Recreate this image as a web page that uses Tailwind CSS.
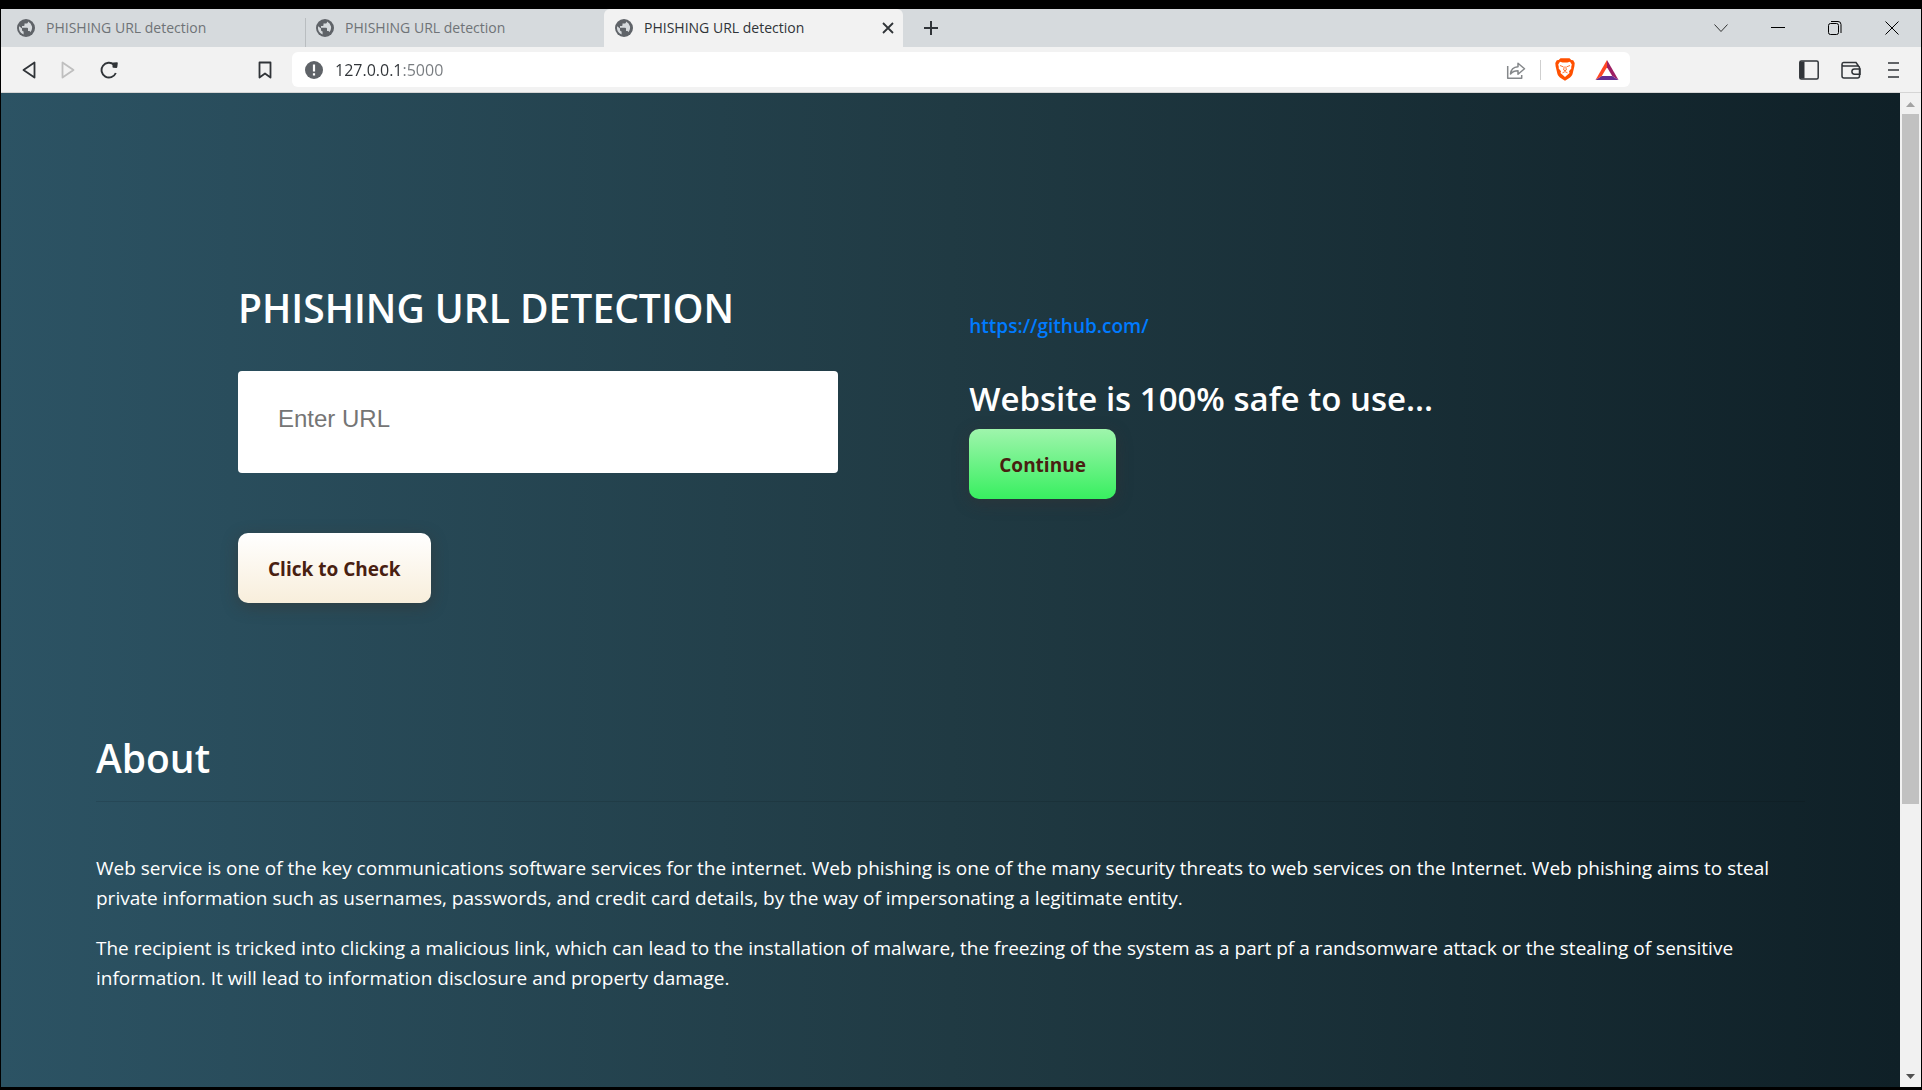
<!DOCTYPE html>
<html lang="en">
<head>
<meta charset="utf-8">
<meta name="viewport" content="width=device-width, initial-scale=1">
<title>PHISHING URL detection</title>
<script src="https://cdn.jsdelivr.net/npm/@tailwindcss/browser@4"></script>
</head>
<body class="flex min-h-screen flex-col bg-black px-px pt-[9px] pb-[3px] font-['Open_Sans','Noto_Sans',sans-serif]">
<svg class="hidden" aria-hidden="true">
  <symbol id="globe" viewBox="0 0 18 18">
    <circle cx="9" cy="9" r="9" fill="#5f6368"/>
    <path fill="#d6dadd" d="M2.2 7.2 5 9.6v1.2c0 .9.7 1.6 1.6 1.6v3.1A6.9 6.9 0 0 1 2.2 7.2zM11 2.4v.5c0 .9-.8 1.7-1.700 1.700H7.500v1.600c0 .5-.4.8-.9.8H5v1.700h5.100c.5 0 .9.4.9.9v2.400h.8c.8 0 1.400.5 1.600 1.200A6.900 6.900 0 0 0 11 2.400z"/>
  </symbol>
</svg>

<header class="bg-[#f2f2f2] text-[#303438]">
  <div class="flex h-[38px] items-stretch bg-[#d6dadd]">
    <div class="flex" role="tablist">
      <button role="tab" class="flex w-[304px] items-center gap-[11px] pl-4 text-left text-sm text-[#6f7377]"><svg class="size-[18px]"><use href="#globe"/></svg>PHISHING URL detection</button>
      <button role="tab" class="flex w-[299px] items-center gap-[11px] pl-[11px] text-left text-sm text-[#6f7377] bg-[linear-gradient(#b9bdc0,#b9bdc0)] bg-[length:1px_29px] bg-bottom-left bg-no-repeat"><svg class="size-[18px]"><use href="#globe"/></svg>PHISHING URL detection</button>
      <div class="flex w-[299px] items-center rounded-t-md bg-[#f2f2f2] pr-[9px] pl-[11px]">
        <button role="tab" aria-selected="true" class="flex flex-1 items-center gap-[11px] text-left text-sm"><svg class="size-[18px]"><use href="#globe"/></svg>PHISHING URL detection</button>
        <button aria-label="Close tab"><svg class="size-3" viewBox="0 0 12 12" fill="none" stroke="currentColor" stroke-width="1.800"><path d="m1 1 10 10M11 1 1 11"/></svg></button>
      </div>
    </div>
    <button aria-label="New tab" class="ml-5"><svg class="size-4" viewBox="0 0 16 16" fill="none" stroke="currentColor" stroke-width="2"><path d="M8 1v14M1 8h14"/></svg></button>
    <div class="ml-auto flex items-center gap-[43px] pr-[22px] text-black">
      <button aria-label="Search tabs"><svg class="size-[14px]" viewBox="0 0 14 14" fill="none" stroke="#333"><path d="m.5 3.500 6.500 7 6.500-7"/></svg></button>
      <button aria-label="Minimize"><svg class="size-[14px]" viewBox="0 0 14 14" fill="none" stroke="currentColor"><path d="M0 6.500h14"/></svg></button>
      <button aria-label="Restore"><svg class="size-[14px]" viewBox="0 0 14 14" fill="none" stroke="currentColor"><rect x=".5" y="2.500" width="10" height="11" rx="2"/><path d="M3 .5h7a3 3 0 0 1 3 3V12"/></svg></button>
      <button aria-label="Close window"><svg class="size-[14px]" viewBox="0 0 14 14" fill="none" stroke="currentColor"><path d="m.5.5 13 13M13.500.5l-13 13"/></svg></button>
    </div>
  </div>
  <div class="flex h-[46px] items-center border-b border-[#d5d5d5] pr-[22px] pl-[21px]">
    <div class="flex gap-[25px]">
      <button aria-label="Back"><svg class="h-[18px] w-[14px]" viewBox="0 0 14 18" fill="none" stroke="currentColor" stroke-width="1.800" stroke-linejoin="round"><path d="M12.500 1.500v15L1.500 9z"/></svg></button>
      <button aria-label="Forward"><svg class="h-[18px] w-[14px]" viewBox="0 0 14 18" fill="none" stroke="#bfbfbf" stroke-width="1.800" stroke-linejoin="round"><path d="M1.500 1.500v15l11-7.500z"/></svg></button>
      <button aria-label="Reload"><svg class="size-[18px]" viewBox="0 0 18 18" fill="none" stroke="currentColor" stroke-width="1.900"><path d="M15.800 12A7.400 7.400 0 1 1 14 3.700"/><path fill="currentColor" stroke="none" d="M12.500 2.500q0-1 1-1L17 1.300q.8 0 .8.800L17.300 6q-.1.900-1 .9l-3-.2q-.8-.1-.8-.9z"/></svg></button>
    </div>
    <button aria-label="Bookmark" class="ml-[140px]"><svg class="h-[18px] w-[14px]" viewBox="0 0 14 18" fill="none" stroke="currentColor" stroke-width="1.800" stroke-linejoin="round"><path d="M1.500 1.500h11v15L7 12.500l-5.500 4z"/></svg></button>
    <div class="ml-[20px] flex h-[35px] flex-1 items-center rounded-md bg-white pr-[11px] pl-[13px]">
      <button aria-label="Site information"><svg class="size-[18px]" viewBox="0 0 18 18"><circle cx="9" cy="9" r="9" fill="#5f6368"/><path stroke="#fff" stroke-width="2.200" d="M9 3.500v7M9 12.300v2.300"/></svg></button>
      <input aria-label="Address" value="127.0.0.1:5000" class="ml-3 min-w-0 flex-1 bg-[linear-gradient(90deg,#303438_66px,#777b7f_66px)] bg-clip-text text-base text-transparent outline-none">
      <button aria-label="Share"><svg class="size-5" viewBox="0 0 20 20" fill="none" stroke="#85888b" stroke-width="1.500" stroke-linejoin="round"><path d="M1.700 6v12.200h14V15"/><path d="M4.500 14c.4-4.500 3-7 7.500-7.300V3.200l6.500 5.600-6.500 5.500v-3.500c-3.500 0-5.700 1-7.500 3.200z"/></svg></button>
      <span class="mx-[14px] h-5 w-px bg-[#cfcfcf]"></span>
      <button aria-label="Brave Shields"><svg class="h-[23px] w-5" viewBox="0 0 20 23"><path fill="#ff5000" d="M5.500.3h9L16.300 2l1.900.3 1.500 2.700-.3 3.200-1.900 8c-.5 2-3.500 4.200-7.500 6.600-4-2.400-7-4.600-7.500-6.600l-1.900-8L.3 5l1.500-2.700L3.700 2z"/><path fill="#fff" d="m5 3.800 2.700.8h4.600l2.700-.8 1.800 2.700-.6 2.500.1 1.500-2.300 2.800.5 1.700-2.500 2.300-2 1.700-2-1.700L5.500 15l.5-1.700-2.300-2.800.1-1.500-.6-2.500z"/><path fill="none" stroke="#ff5000" stroke-width=".8" d="M5 7.500 8.300 8.800M15 7.500l-3.300 1.300M9.200 8.500l-.5 3.500 1.300.8 1.300-.8-.5-3.500M7.500 14.800l2.500-1.200 2.500 1.200"/></svg></button>
      <button aria-label="Brave Rewards" class="ml-5"><svg class="h-5 w-6" viewBox="0 0 24 20"><path fill="#ff4724" d="M12 0v7.200L6.800 16 .5 20z"/><path fill="#9e1f63" d="M12 0v7.200l5.200 8.800 6.300 4z"/><path fill="#662d91" d="M.5 20h23l-6.300-4H6.800z"/></svg></button>
    </div>
    <div class="ml-[169px] flex items-center gap-[22px]">
      <button aria-label="Sidebar"><svg class="size-5" viewBox="0 0 20 20" fill="none" stroke="currentColor" stroke-width="1.500"><rect x=".8" y="1" width="18.400" height="18" rx="1.500"/><path fill="currentColor" stroke="none" d="M1 1.500h4.500v17H1z"/></svg></button>
      <button aria-label="Wallet"><svg class="size-5" viewBox="0 0 20 20" fill="none" stroke="currentColor" stroke-width="1.500"><path d="M1 4v12a2 2 0 0 0 2 2h13.500a2 2 0 0 0 2-2V8a2 2 0 0 0-2-2H2.500C.5 6 .5 2.500 2.500 2.500H15L17.500 6"/><path d="M19 9h-5.500a2.600 2.600 0 0 0 0 5.200H19z"/></svg></button>
      <button aria-label="Menu" class="ml-[5px]"><svg class="h-4 w-[11px]" viewBox="0 0 11 16" fill="none" stroke="currentColor" stroke-width="1.500"><path d="M0 1h11M0 8h11M0 15h11"/></svg></button>
    </div>
  </div>
</header>

<div class="flex flex-1">
  <main class="flex-1 bg-linear-to-r/srgb from-[#2c5364] via-[#203a43] to-[#0f2027] px-[95px] pb-20 text-white">
    <div class="grid grid-cols-[7fr_8fr] pt-[191px] pl-[142px]">
      <form class="flex flex-col items-start" onsubmit="return false">
        <h1 class="text-[39px] leading-12 font-semibold">PHISHING URL DETECTION</h1>
        <input type="text" aria-label="Enter URL" placeholder="Enter URL" class="mt-[39px] h-[102px] w-[600px] rounded bg-white px-10 pb-1.5 font-['Liberation_Sans',sans-serif] text-2xl text-black placeholder:text-[#757575]">
        <button class="mt-[60px] h-[70px] rounded-[10px] bg-linear-to-b/srgb from-white to-[#f8eedb] px-[30px] pt-0.5 text-[19px] font-bold text-[#482010] shadow-[0_4px_16px_rgba(62,45,35,0.4)]">Click to Check</button>
      </form>
      <section class="flex flex-col items-start pt-[30px]">
        <a href="https://github.com/" class="text-[19px] leading-6 font-semibold text-[#007bff]">https://github.com/</a>
        <h2 class="mt-[39px] text-[33px] leading-[44px] font-semibold">Website is 100% safe to use...</h2>
        <button class="mt-2 h-[70px] rounded-[10px] bg-linear-to-b/srgb from-[#9ff5ac] to-[#38ef60] px-[30px] pt-0.5 text-[19px] font-bold text-[#482010] shadow-[0_4px_16px_rgba(62,45,45,0.4)]">Continue</button>
      </section>
    </div>
    <section class="pt-[131px] text-[19px] leading-[30px]">
      <h2 class="text-[39px] leading-12 font-semibold">About</h2>
      <hr class="mt-[19px] mb-[51px] border-black/10">
      <p>Web service is one of the key communications software services for the internet. Web phishing is one of the many security threats to web services on the Internet. Web phishing aims to steal private information such as usernames, passwords, and credit card details, by the way of impersonating a legitimate entity.</p>
      <p class="mt-5">The recipient is tricked into clicking a malicious link, which can lead to the installation of malware, the freezing of the system as a part pf a randsomware attack or the stealing of sensitive information. It will lead to information disclosure and property damage.</p>
    </section>
  </main>
  <div class="flex w-[21px] flex-col items-center bg-[#f1f1f1]" aria-hidden="true">
    <svg class="h-[21px] w-[9px]" viewBox="0 0 9 21"><path fill="#a3a3a3" d="M0 14h9L4.500 9z"/></svg>
    <div class="flex w-[17px] flex-1 flex-col"><div class="h-[690px] bg-[#c1c1c1]"></div></div>
    <svg class="h-[21px] w-[9px]" viewBox="0 0 9 21"><path fill="#505050" d="M0 8h9l-4.500 5z"/></svg>
  </div>
</div>
</body>
</html>
